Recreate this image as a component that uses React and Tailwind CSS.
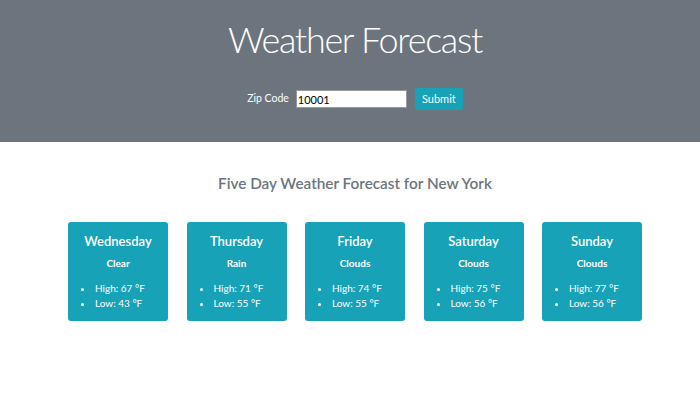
import React from 'react';

const days = [
  { name: 'Wednesday', cond: 'Clear', high: 67, low: 43 },
  { name: 'Thursday', cond: 'Rain', high: 71, low: 55 },
  { name: 'Friday', cond: 'Clouds', high: 74, low: 55 },
  { name: 'Saturday', cond: 'Clouds', high: 75, low: 56 },
  { name: 'Sunday', cond: 'Clouds', high: 77, low: 56 },
];

const font = { fontFamily: 'Lato, "Open Sans", sans-serif' };

function DayCard({ day }) {
  return (
    <div className="w-[100px] h-[99px] rounded-[3px] bg-[#17a2b8] text-white flex flex-col items-center pt-[9px]">
      <h3 className="text-[13px] font-semibold leading-[20px]">{day.name}</h3>
      <p className="text-[10px] font-bold leading-[14px] mt-[5px]">{day.cond}</p>
      <ul className="self-start pl-[13px] mt-[11px] text-[10px] leading-[15px] list-disc list-inside">
        <li>High: {day.high} °F</li>
        <li>Low: {day.low} °F</li>
      </ul>
    </div>
  );
}

export default function App() {
  return (
    <div className="w-[700px] h-[420px] bg-white overflow-hidden" style={font}>
      {/* Header */}
      <header className="h-[142px] bg-[#6c757d] flex flex-col items-center pl-[10px] pt-[15px]">
        <h1 className="text-[36px] font-light text-white leading-[48px] tracking-[-1.3px]">Weather Forecast</h1>
        <form className="flex items-center mt-[25px]" onSubmit={(e) => e.preventDefault()}>
          <label className="text-[10.5px] text-white mr-[7px]">Zip Code</label>
          <input
            type="text"
            defaultValue="10001"
            className="w-[111px] h-[18px] bg-white border border-[#9a9a9a] px-[1px] text-[11px] text-black outline-none"
          />
          <button type="button" className="ml-[8px] w-[48px] h-[22px] rounded-[2px] bg-[#17a2b8] text-white text-[11px]">
            Submit
          </button>
        </form>
      </header>

      {/* Forecast */}
      <main className="flex flex-col items-center pl-[10px]">
        <h2 className="mt-[30px] text-[15.3px] font-semibold text-[#6c757d] leading-[22px]">
          Five Day Weather Forecast for New York
        </h2>
        <div className="flex gap-[18.5px] mt-[28px]">
          {days.map((d) => (
            <DayCard key={d.name} day={d} />
          ))}
        </div>
      </main>
    </div>
  );
}
